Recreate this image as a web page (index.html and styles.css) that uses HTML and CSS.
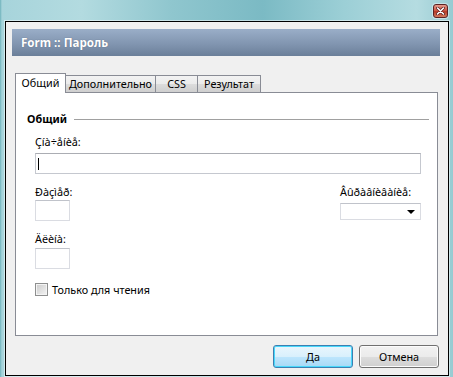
FILE: index.html
```html
<!DOCTYPE html>
<html lang="ru">
<head>
    <meta charset="UTF-8">
    <meta name="viewport" content="width=device-width, initial-scale=1.0">
    <title>Form :: Пароль</title>
    <link rel="stylesheet" href="styles.css">
</head>
<body>

    <div class="window">

        <!-- Window frame title area -->
        <div class="titlebar">
            <span class="close-btn">
                <svg width="9" height="8" viewBox="0 0 9 8">
                    <path d="M1.5 1 L7.5 7 M7.5 1 L1.5 7" stroke="#5a1d1d" stroke-width="3" stroke-linecap="round"/>
                    <path d="M1.5 1 L7.5 7 M7.5 1 L1.5 7" stroke="#ffffff" stroke-width="1.6" stroke-linecap="round"/>
                </svg>
            </span>
        </div>

        <div class="client">
            <div class="form-header">Form :: Пароль</div>

            <!-- Tabs -->
            <div class="tabs">
                <div class="tab active">Общий</div>
                <div class="tab">Дополнительно</div>
                <div class="tab">CSS</div>
                <div class="tab">Результат</div>
            </div>

            <div class="tab-panel">
                <div class="group-title">
                    <span>Общий</span>
                    <span class="group-line"></span>
                </div>

                <div class="group-body">
                    <div class="field-label first">Çíà÷åíèå:</div>
                    <div class="text-input wide"><span class="caret"></span></div>

                    <div class="field-row">
                        <div class="field">
                            <div class="field-label">Ðàçìåð:</div>
                            <div class="text-input small"></div>
                        </div>
                        <div class="field">
                            <div class="field-label">Âûðàâíèâàíèå:</div>
                            <div class="select-box"><span class="arrow"></span></div>
                        </div>
                    </div>

                    <div class="field-label third">Äëèíà:</div>
                    <div class="text-input small third-input"></div>

                    <div class="check-row">
                        <span class="checkbox"></span>
                        <span>Только для чтения</span>
                    </div>
                </div>
            </div>

            <!-- Dialog buttons -->
            <div class="buttons">
                <button class="btn default">Да</button>
                <button class="btn">Отмена</button>
            </div>
        </div>
    </div>

</body>
</html>
```

FILE: styles.css
```css
body {
    margin: 0;
    padding: 0;
    font-family: 'Noto Sans', 'DejaVu Sans', sans-serif;
    font-size: 10.8px;
    color: #000;
}
.window {
    width: 453px;
    height: 377px;
    box-sizing: border-box;
    padding: 0 4px 1px 5px;
    display: flex;
    flex-direction: column;
    background: linear-gradient(90deg, #6fb3bc 0, #a7d4db 2px, #b3dbe0 18%, #8fc6ce 38%, #7bbac4 58%, #9ccfd6 76%, #b5dce1 92%, #98cbd2 100%);
}
.titlebar {
    height: 21px;
    display: flex;
    justify-content: flex-end;
    align-items: flex-start;
}
.close-btn {
    width: 13px;
    height: 12px;
    margin: 4px 1px 0 0;
    border: 1px solid #5e2222;
    border-radius: 3px;
    background: linear-gradient(#e49a8c, #c9513e 50%, #b53a26 55%, #d47a5e);
    display: flex;
    align-items: center;
    justify-content: center;
    box-shadow: 0 0 0 1px rgba(255, 255, 255, 0.4);
}
.client {
    flex: 1;
    border: 1px solid #000;
    background-color: #f0f0f0;
    box-shadow: 0 0 0 1px rgba(255, 255, 255, 0.5);
    display: flex;
    flex-direction: column;
}
.form-header {
    height: 27px;
    margin: 7px 8px 0 6px;
    padding-left: 9px;
    display: flex;
    align-items: center;
    background: linear-gradient(#9aaec8, #7f93ae 60%, #6b7f99);
    color: #fff;
    font-weight: bold;
    font-size: 11.6px;
    text-shadow: 0 0 1px rgba(40, 50, 70, 0.5);
}
.tabs {
    display: flex;
    align-items: flex-end;
    margin: 17px 0 0 9px;
    height: 19px;
    position: relative;
    z-index: 1;
}
.tab {
    height: 17px;
    box-sizing: border-box;
    border: 1px solid #898c95;
    border-bottom: none;
    margin-left: -1px;
    background: linear-gradient(#f3f3f3, #ebebeb 50%, #dcdcdc 51%, #cfcfcf);
    display: flex;
    align-items: center;
    justify-content: center;
    padding-bottom: 1px;
}
.tab:nth-child(1) { width: 51px; margin-left: 0; }
.tab:nth-child(2) { width: 91px; }
.tab:nth-child(3) { width: 43px; }
.tab:nth-child(4) { width: 64px; }
.tab.active {
    height: 20px;
    margin-bottom: -1px;
    background: #fff;
    padding-bottom: 3px;
}
.tab-panel {
    height: 244px;
    box-sizing: border-box;
    margin: 0 10px 0 9px;
    border: 1px solid #898c95;
    background-color: #fff;
    padding: 18px 8px 0 11px;
}
.group-title {
    display: flex;
    align-items: center;
    font-weight: bold;
    line-height: 15px;
}
.group-line {
    flex: 1;
    height: 1px;
    margin: 1px 0 0 7px;
    background-color: #a0a0a0;
}
.group-body {
    padding: 0 8px;
}
.field-label {
    line-height: 15px;
    margin-top: 10px;
}
.field-label.first {
    margin-top: 8px;
}
.text-input {
    height: 21px;
    box-sizing: border-box;
    border: 1px solid #c5c8cf;
    border-top-color: #abadb3;
    background-color: #fff;
    margin-top: 4px;
}
.text-input.wide {
    display: flex;
    align-items: center;
}
.text-input.small {
    width: 35px;
    margin-top: 1px;
    border-color: #dadce2;
    border-top-color: #c0c3ca;
}
.text-input.third-input {
    margin-top: 2px;
}
.caret {
    width: 1px;
    height: 12px;
    margin-left: 2px;
    background-color: #000;
}
.field-row {
    display: flex;
    justify-content: space-between;
}
.select-box {
    width: 81px;
    height: 17px;
    margin-top: 4px;
    box-sizing: border-box;
    border: 1px solid #dadce2;
    border-top-color: #c0c3ca;
    background-color: #fff;
    display: flex;
    align-items: center;
    justify-content: flex-end;
    padding-right: 5px;
}
.arrow {
    width: 0;
    height: 0;
    border-left: 4px solid transparent;
    border-right: 4px solid transparent;
    border-top: 4px solid #000;
}
.check-row {
    display: flex;
    align-items: center;
    gap: 4px;
    margin-top: 14px;
    height: 13px;
}
.checkbox {
    width: 13px;
    height: 13px;
    box-sizing: border-box;
    border: 1px solid #8e8f8f;
    background: linear-gradient(135deg, #cbcbcb, #f4f4f4);
    box-shadow: inset 0 0 0 1px #f4f4f4;
}
.buttons {
    display: flex;
    justify-content: flex-end;
    gap: 6px;
    margin: 9px 9px 0 0;
}
.btn {
    width: 80px;
    height: 23px;
    font-family: inherit;
    font-size: 10.8px;
    color: #000;
    border: 1px solid #707070;
    border-radius: 3px;
    background: linear-gradient(#f2f2f2, #ebebeb 50%, #dddddd 51%, #cfcfcf);
    box-shadow: inset 0 0 0 1px #fcfcfc;
    padding: 0;
}
.btn.default {
    border-color: #3c7fb1;
    background: linear-gradient(#eaf6fd, #d9f0fc 50%, #bee6fd 51%, #a7d9f5);
    box-shadow: inset 0 0 0 1px #48d8fb;
}
```
